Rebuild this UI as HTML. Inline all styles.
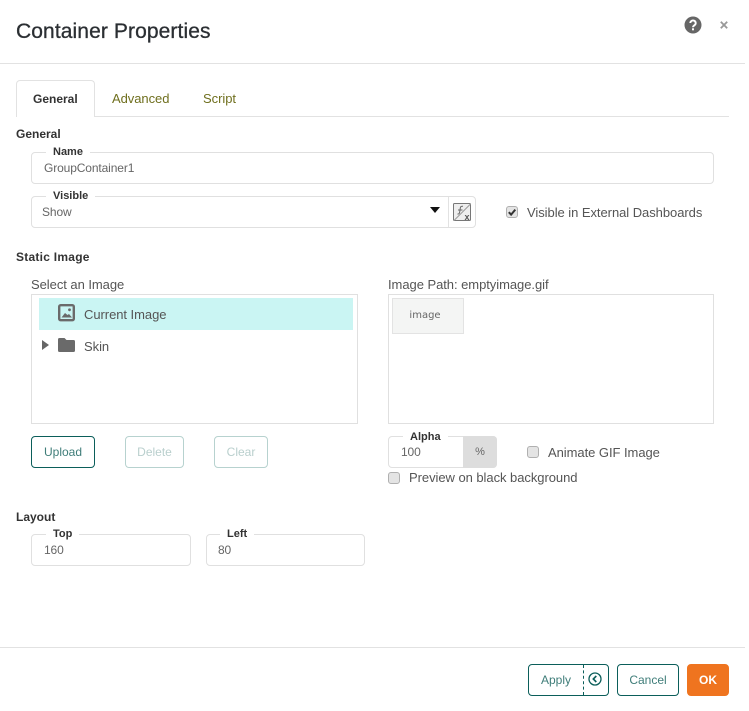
<!DOCTYPE html>
<html><head><meta charset="utf-8"><style>
html,body{margin:0;padding:0;background:#fff;}
body{width:749px;height:711px;position:relative;overflow:hidden;font-family:"Liberation Sans",sans-serif;font-size:12px;color:#555;}
.t{position:absolute;white-space:nowrap;line-height:16px;}
.l{font-size:13px;letter-spacing:-.05px;}
.i{letter-spacing:-.12px;color:#666;}
.b{font-weight:bold;color:#333;}
.box{position:absolute;box-sizing:border-box;border:1px solid #e0e0e0;border-radius:4px;background:#fff;}
.leg{position:absolute;background:#fff;padding:0 7px;font-weight:bold;color:#333;font-size:11px;line-height:12px;white-space:nowrap;}
.btn{position:absolute;box-sizing:border-box;border:1px solid #0b5e5a;border-radius:4px;height:32px;line-height:30px;text-align:center;color:#3f7d79;background:#fff;}
.dis{border-color:#b7d2cf;color:#b9cfcd;}
.cb{position:absolute;box-sizing:border-box;width:12px;height:12px;border:1px solid #b0b0b0;border-radius:3px;background:#e4e4e4;}
.ln{position:absolute;background:#e2e2e2;height:1px;}
</style></head><body>
<div class="t" style="left:16px;top:19px;font-size:21px;letter-spacing:.1px;line-height:26px;color:#2b2f33;-webkit-text-stroke:.3px #2b2f33;">Container Properties</div>
<svg style="position:absolute;left:684px;top:16px" width="18" height="18" viewBox="0 0 18 18"><circle cx="9" cy="9" r="8.500" fill="#666"/><path d="M6.300 7a2.700 2.600 0 1 1 4.200 2.200c-1 .7-1.500 1-1.500 2.100" fill="none" stroke="#fff" stroke-width="1.900"/><rect x="8" y="12.300" width="2" height="2" fill="#fff"/></svg>
<svg style="position:absolute;left:720px;top:21px" width="8" height="8" viewBox="0 0 8 8"><path d="M.8.8l6.400 6.400M7.200.8L.8 7.200" stroke="#999" stroke-width="1.800"/></svg>
<div class="ln" style="left:0;top:63px;width:745px;"></div>

<div class="ln" style="left:16px;top:116px;width:713px;"></div>
<div style="position:absolute;left:16px;top:80px;width:79px;height:37px;box-sizing:border-box;border:1px solid #e2e2e2;border-bottom:0;border-radius:4px 4px 0 0;background:#fff;"></div>
<div class="t b" style="left:33px;top:91px;">General</div>
<div class="t l" style="left:112px;top:91px;color:#6f6f1e;">Advanced</div>
<div class="t l" style="left:203px;top:91px;color:#6f6f1e;">Script</div>

<div class="t b" style="left:16px;top:126px;">General</div>
<div class="box" style="left:31px;top:152px;width:683px;height:32px;"></div>
<div class="leg" style="left:46px;top:146px;">Name</div>
<div class="t i" style="left:44px;top:160px;">GroupContainer1</div>

<div class="box" style="left:31px;top:196px;width:445px;height:32px;"></div>
<div class="leg" style="left:46px;top:190px;">Visible</div>
<div class="t i" style="left:42px;top:204px;">Show</div>
<div style="position:absolute;left:430px;top:207px;width:0;height:0;border-left:5.500px solid transparent;border-right:5.500px solid transparent;border-top:6px solid #111;"></div>
<div style="position:absolute;left:448px;top:197px;width:1px;height:30px;background:#e2e2e2;"></div>
<svg style="position:absolute;left:453px;top:203px" width="19" height="19" viewBox="0 0 19 19"><rect x=".5" y=".5" width="17" height="17" rx="1" fill="#eee" stroke="#777"/><path d="M1 17.500L17.500 1" stroke="#999"/><path d="M4.500 11c1.500.3 2-.5 2.300-2.500l.5-3.500c.2-1.500 1.200-2 2.700-1.700M5 7h4.500" fill="none" stroke="#666" stroke-width="1"/><text x="11.500" y="17" font-family="Liberation Sans" font-size="9" font-weight="bold" fill="#555">x</text></svg>
<div class="cb" style="left:506px;top:206px;"></div>
<svg style="position:absolute;left:506px;top:206px" width="12" height="12" viewBox="0 0 12 12"><path d="M2.800 6.200l2.300 2.400 4.200-5" fill="none" stroke="#333" stroke-width="2"/></svg>
<div class="t l" style="left:527px;top:205px;">Visible in External Dashboards</div>

<div class="t b" style="left:16px;top:249px;letter-spacing:.25px;">Static Image</div>
<div class="t l" style="left:31px;top:277px;">Select an Image</div>
<div class="box" style="left:31px;top:294px;width:327px;height:130px;border-radius:0;"></div>
<div style="position:absolute;left:39px;top:298px;width:314px;height:32px;background:#caf5f3;"></div>
<svg style="position:absolute;left:58px;top:304px" width="17" height="18" viewBox="0 0 17 18"><rect x="1.200" y="1.200" width="14.600" height="15" rx="1.500" fill="none" stroke="#6a6a6a" stroke-width="2.400"/><path d="M3.500 13.500l3.500-4.500 2.500 2 1.500-1 3 3.500z" fill="#6a6a6a"/><circle cx="11.500" cy="5.800" r="1.400" fill="#6a6a6a"/></svg>
<div class="t l" style="left:84px;top:307px;">Current Image</div>
<div style="position:absolute;left:42px;top:340px;width:0;height:0;border-top:5px solid transparent;border-bottom:5px solid transparent;border-left:7px solid #666;"></div>
<svg style="position:absolute;left:58px;top:338px" width="17" height="14" viewBox="0 0 17 14"><path d="M1.500 0h5l2 2h7a1.500 1.500 0 0 1 1.500 1.500v9a1.500 1.500 0 0 1-1.500 1.500h-14a1.500 1.500 0 0 1-1.500-1.500v-11a1.500 1.500 0 0 1 1.500-1.500z" fill="#6a6a6a"/></svg>
<div class="t l" style="left:84px;top:339px;">Skin</div>

<div class="btn" style="left:31px;top:436px;width:64px;">Upload</div>
<div class="btn dis" style="left:125px;top:436px;width:59px;">Delete</div>
<div class="btn dis" style="left:214px;top:436px;width:54px;">Clear</div>

<div class="t l" style="left:388px;top:277px;">Image Path: emptyimage.gif</div>
<div class="box" style="left:388px;top:294px;width:326px;height:130px;border-radius:0;"></div>
<div style="position:absolute;left:392px;top:298px;width:72px;height:36px;box-sizing:border-box;border:1px solid #e3e3e3;background:#f4f5f4;padding-right:6px;text-align:center;line-height:34px;font-family:'DejaVu Sans',sans-serif;font-size:10px;color:#666;">image</div>

<div class="box" style="left:388px;top:436px;width:109px;height:32px;"></div>
<div style="position:absolute;left:463px;top:436px;width:34px;height:32px;background:#ddd;border-radius:0 4px 4px 0;text-align:center;line-height:32px;font-size:11px;color:#666;">%</div>
<div class="leg" style="left:403px;top:431px;">Alpha</div>
<div class="t i" style="left:401px;top:444px;">100</div>
<div class="cb" style="left:527px;top:446px;"></div>
<div class="t l" style="left:548px;top:445px;">Animate GIF Image</div>
<div class="cb" style="left:388px;top:472px;"></div>
<div class="t l" style="left:409px;top:470px;">Preview on black background</div>

<div class="t b" style="left:16px;top:509px;">Layout</div>
<div class="box" style="left:31px;top:534px;width:160px;height:32px;"></div>
<div class="leg" style="left:46px;top:528px;">Top</div>
<div class="t i" style="left:44px;top:542px;">160</div>
<div class="box" style="left:206px;top:534px;width:159px;height:32px;"></div>
<div class="leg" style="left:220px;top:528px;">Left</div>
<div class="t i" style="left:218px;top:542px;">80</div>

<div class="ln" style="left:0;top:647px;width:745px;"></div>
<div class="btn" style="left:528px;top:664px;width:81px;text-align:left;padding-left:12px;">Apply</div>
<div style="position:absolute;left:583px;top:665px;height:30px;border-left:1px dashed #0b5e5a;"></div>
<svg style="position:absolute;left:588px;top:672px" width="14" height="14" viewBox="0 0 14 14"><circle cx="7" cy="7" r="6" fill="none" stroke="#0b5e5a" stroke-width="1.300"/><path d="M8.300 4L5.300 7l3 3" fill="none" stroke="#0b5e5a" stroke-width="1.600"/></svg>
<div class="btn" style="left:617px;top:664px;width:62px;">Cancel</div>
<div class="btn" style="left:687px;top:664px;width:42px;background:#ef741f;border-color:#ef741f;color:#fff;font-weight:bold;">OK</div>
</body></html>
